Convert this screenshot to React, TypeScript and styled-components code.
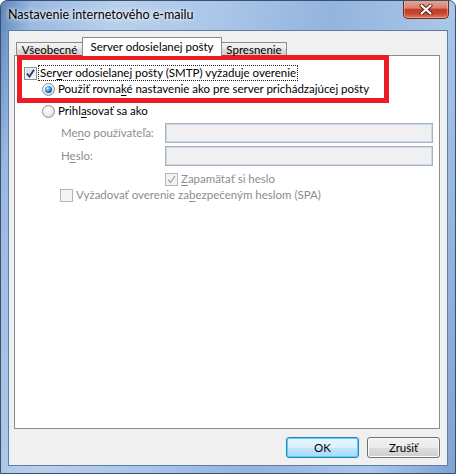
import React from 'react';
import styled, { createGlobalStyle } from 'styled-components';

const GlobalStyle = createGlobalStyle`
    html, body {
        margin: 0;
        padding: 0;
        background: #ffffff;
    }
    body {
        font-family: Lato, 'Noto Sans', 'Liberation Sans', sans-serif;
        font-size: 11.5px;
        color: #000000;
    }
`;

const Frame = styled.div`
    position: relative;
    width: 456px;
    height: 474px;
    box-sizing: border-box;
    display: flex;
    flex-direction: column;
    border: 1px solid #3a5073;
    border-radius: 7px 7px 0 0;
    overflow: hidden;
    background: linear-gradient(
        100deg,
        #5d84bb 0%,
        #9ab9e0 6%,
        #b9d0eb 22%,
        #a9c5e8 42%,
        #93b4de 62%,
        #aac6e8 84%,
        #7ea2d3 100%
    );
`;

const TitleBar = styled.div`
    height: 29px;
    display: flex;
    align-items: flex-start;
    padding-left: 7px;
`;

const Title = styled.span`
    margin-top: 6px;
    font-size: 12.5px;
    line-height: 16px;
    color: #000000;
    text-shadow: 0 0 6px rgba(255, 255, 255, 0.95), 0 0 3px rgba(255, 255, 255, 0.9);
`;

const CloseButton = styled.div`
    margin: -1px 6px 0 auto;
    width: 46px;
    height: 19px;
    box-sizing: border-box;
    display: flex;
    align-items: center;
    justify-content: center;
    border: 1px solid #6b2a22;
    border-top: none;
    border-radius: 0 0 5px 5px;
    background: linear-gradient(180deg, #e9a999 0%, #d9806c 45%, #c33d23 52%, #c9472d 75%, #e0785c 100%);
    box-shadow: inset 0 0 0 1px rgba(255, 210, 200, 0.45);
`;

const Client = styled.div`
    flex: 1;
    margin: 0 7px 7px 7px;
    box-sizing: border-box;
    display: flex;
    flex-direction: column;
    padding: 6px 7px 7px 5px;
    background: #f0f0f0;
    border: 1px solid #5f7ca6;
`;

const TabStrip = styled.div`
    height: 18px;
    display: flex;
    align-items: flex-end;
    padding-left: 3px;
`;

const Tab = styled.div<{ active?: boolean; width: number }>`
    position: relative;
    z-index: ${p => (p.active ? 2 : 1)};
    width: ${p => p.width}px;
    height: ${p => (p.active ? 19 : 13)}px;
    margin-bottom: ${p => (p.active ? -1 : 0)}px;
    margin-left: -1px;
    box-sizing: border-box;
    display: flex;
    align-items: ${p => (p.active ? 'flex-start' : 'center')};
    justify-content: center;
    padding-top: ${p => (p.active ? 2 : 1)}px;
    border: 1px solid #898c95;
    border-bottom: none;
    background: ${p => (p.active ? '#ffffff' : 'linear-gradient(180deg, #f2f2f2 0%, #ebebeb 50%, #dddddd 51%, #cfcfcf 100%)')};
    font-size: 11.5px;
    line-height: 13px;
    white-space: nowrap;
`;

const Panel = styled.div`
    position: relative;
    height: 374px;
    box-sizing: border-box;
    display: flex;
    flex-direction: column;
    padding: 10px 7px 0 9px;
    background: #ffffff;
    border: 1px solid #898c95;
`;

const Highlight = styled.div`
    position: absolute;
    left: 2px;
    top: -1px;
    width: 372px;
    height: 48px;
    box-sizing: border-box;
    border: 5px solid #ec1c24;
    pointer-events: none;
`;

const Row = styled.div<{ indent?: number; gap?: number }>`
    height: 14px;
    display: flex;
    align-items: center;
    margin-left: ${p => p.indent || 0}px;
    margin-top: ${p => p.gap || 0}px;
    white-space: nowrap;
`;

const Label = styled.span<{ disabled?: boolean }>`
    font-size: 11.5px;
    line-height: 14px;
    color: ${p => (p.disabled ? '#8d8d8d' : '#000000')};
`;

const FocusLabel = styled(Label)`
    margin-left: 2px;
    padding: 0 1px;
    outline: 1px dotted #222222;
    outline-offset: 0;
`;

const CheckLabel = styled(Label)`
    margin-left: 3px;
`;

const Box = styled.span<{ disabled?: boolean }>`
    width: 13px;
    height: 13px;
    flex: none;
    box-sizing: border-box;
    display: flex;
    align-items: center;
    justify-content: center;
    border: 1px solid ${p => (p.disabled ? '#b5b5b5' : '#8e8f8f')};
    background: ${p =>
        p.disabled ? '#f4f4f4' : 'linear-gradient(135deg, #d1d4d8 0%, #eceef0 60%, #fafafa 100%)'};
    box-shadow: inset 0 0 0 1px ${p => (p.disabled ? '#f4f4f4' : '#f5f5f5')};
`;

const RadioCircle = styled.span`
    width: 13px;
    height: 13px;
    flex: none;
    box-sizing: border-box;
    display: flex;
    align-items: center;
    justify-content: center;
    border-radius: 50%;
    border: 1px solid #8e8f8f;
    background: radial-gradient(circle at 40% 35%, #ffffff 0%, #f0f0f0 45%, #c9c9c9 100%);
`;

const RadioDot = styled.span`
    width: 7px;
    height: 7px;
    border-radius: 50%;
    background: radial-gradient(circle at 38% 35%, #c6f3ff 0%, #4fb2ea 30%, #1660b0 65%, #0b3168 100%);
`;

const FieldRow = styled.div<{ gap: number }>`
    height: 20px;
    display: grid;
    grid-template-columns: 104px 268px;
    align-items: center;
    margin-top: ${p => p.gap}px;
    margin-left: 37px;
`;

const TextInput = styled.div`
    height: 20px;
    box-sizing: border-box;
    border: 1px solid #abb0b6;
    background: #f0f0f0;
    box-shadow: inset 0 0 0 1px #c8daee;
`;

const ButtonRow = styled.div`
    display: flex;
    justify-content: flex-end;
    gap: 8px;
    margin-top: 8px;
`;

const Button = styled.div<{ primary?: boolean }>`
    width: 73px;
    height: 21px;
    box-sizing: border-box;
    display: flex;
    align-items: center;
    justify-content: center;
    border-radius: 3px;
    font-size: 11.5px;
    border: 1px solid ${p => (p.primary ? '#3c7fb1' : '#707070')};
    background: ${p =>
        p.primary
            ? 'linear-gradient(180deg, #eaf6fd 0%, #d9f0fc 50%, #bee6fd 51%, #a7d9f5 100%)'
            : 'linear-gradient(180deg, #f2f2f2 0%, #ebebeb 50%, #dddddd 51%, #cfcfcf 100%)'};
    box-shadow: ${p =>
        p.primary ? 'inset 0 0 0 1px #48d5fb, 0 0 1px #7fd6f7' : 'inset 0 0 0 1px #fcfcfc'};
`;

const Key = styled.u`
    text-decoration-thickness: 1px;
    text-underline-offset: 2px;
`;

const CheckMark = ({ disabled }: { disabled?: boolean }) => (
    <svg width="9" height="9" viewBox="0 0 9 9">
        <path
            d="M1 4.5 L3.5 7.5 L8 0.8"
            fill="none"
            stroke={disabled ? '#a8a8a8' : '#1f3a7a'}
            strokeWidth={disabled ? 1.3 : 1.9}
            strokeLinejoin="miter"
        />
    </svg>
);

const CloseGlyph = () => (
    <svg width="14" height="11" viewBox="0 0 14 11">
        <path d="M2.5 1.5 L11.5 9.5 M11.5 1.5 L2.5 9.5" stroke="#5a1f18" strokeWidth="4" strokeLinecap="round" />
        <path d="M2.5 1.5 L11.5 9.5 M11.5 1.5 L2.5 9.5" stroke="#ffffff" strokeWidth="2.2" strokeLinecap="round" />
    </svg>
);

const App = () => (
    <>
        <GlobalStyle />
        <Frame>
            <TitleBar>
                <Title>Nastavenie internetového e-mailu</Title>
                <CloseButton>
                    <CloseGlyph />
                </CloseButton>
            </TitleBar>
            <Client>
                <TabStrip>
                    <Tab width={67}>Všeobecné</Tab>
                    <Tab active width={140}>
                        Server odosielanej pošty
                    </Tab>
                    <Tab width={66}>Spresnenie</Tab>
                </TabStrip>
                <Panel>
                    <Row>
                        <Box>
                            <CheckMark />
                        </Box>
                        <FocusLabel>
                            Ser<Key>v</Key>er odosielanej pošty (SMTP) vyžaduje overenie
                        </FocusLabel>
                    </Row>
                    <Row indent={18} gap={2}>
                        <RadioCircle>
                            <RadioDot />
                        </RadioCircle>
                        <CheckLabel>
                            Použiť rovna<Key>k</Key>é nastavenie ako pre server prichádzajúcej pošty
                        </CheckLabel>
                    </Row>
                    <Row indent={18} gap={8}>
                        <RadioCircle />
                        <CheckLabel>
                            Prihl<Key>a</Key>sovať sa ako
                        </CheckLabel>
                    </Row>
                    <FieldRow gap={5}>
                        <Label disabled>
                            Me<Key>n</Key>o používateľa:
                        </Label>
                        <TextInput />
                    </FieldRow>
                    <FieldRow gap={3}>
                        <Label disabled>
                            H<Key>e</Key>slo:
                        </Label>
                        <TextInput />
                    </FieldRow>
                    <Row indent={141} gap={6}>
                        <Box disabled>
                            <CheckMark disabled />
                        </Box>
                        <CheckLabel disabled>
                            <Key>Z</Key>apamätať si heslo
                        </CheckLabel>
                    </Row>
                    <Row indent={36} gap={2}>
                        <Box disabled />
                        <CheckLabel disabled>
                            Vyžadovať overenie za<Key>b</Key>ezpečeným heslom (SPA)
                        </CheckLabel>
                    </Row>
                    <Highlight />
                </Panel>
                <ButtonRow>
                    <Button primary>OK</Button>
                    <Button>Zrušiť</Button>
                </ButtonRow>
            </Client>
        </Frame>
    </>
);

export default App;
